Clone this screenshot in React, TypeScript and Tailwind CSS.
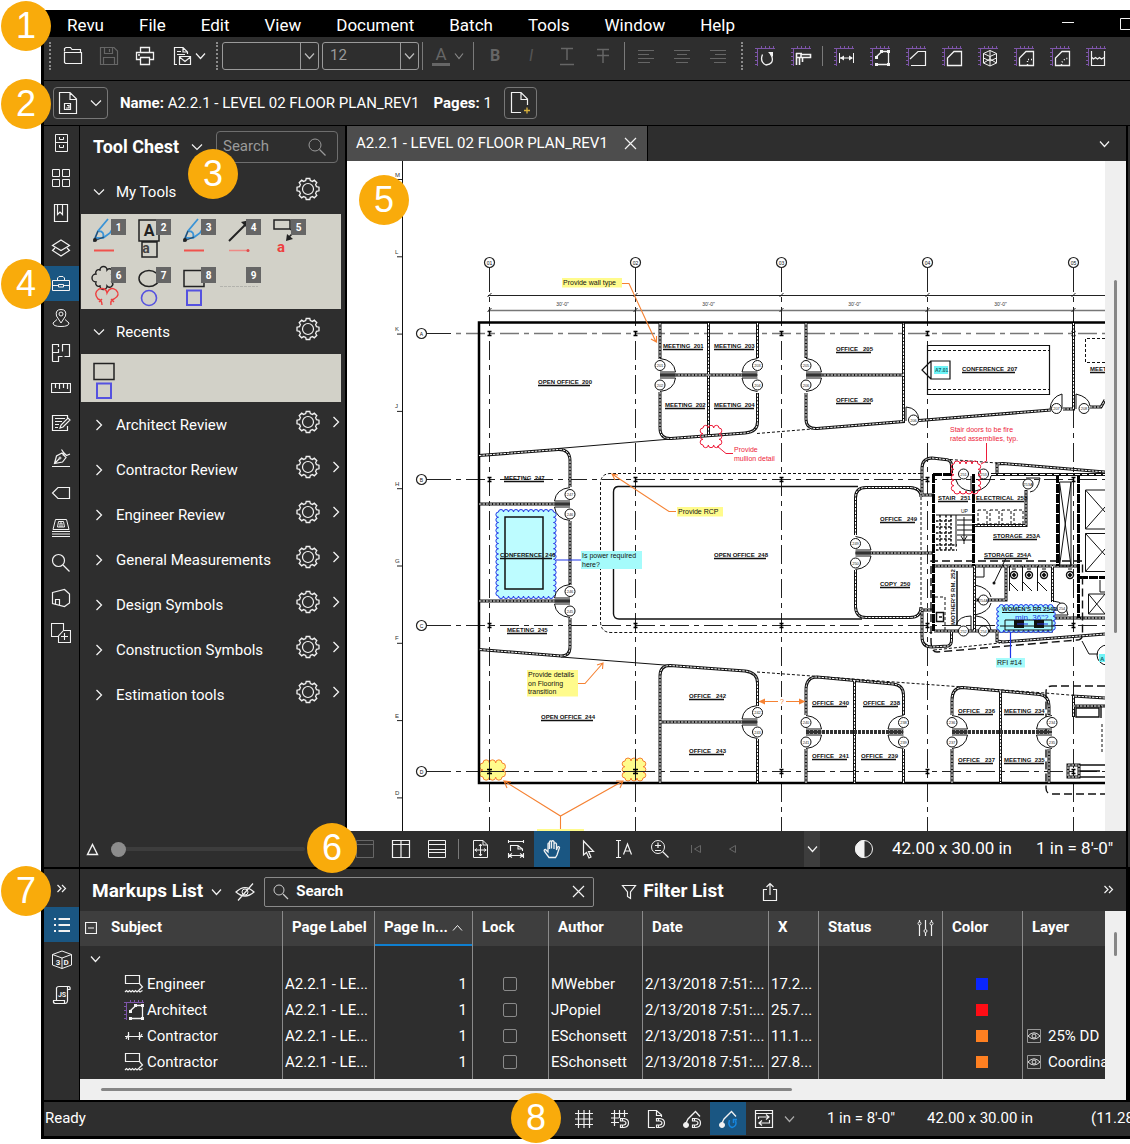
import { useState, type ReactNode } from 'react';

function Svg({ w = 20, h = 20, color = '#f2f2f2', fill = 'none', children }: { w?: number; h?: number; color?: string; fill?: string; children: ReactNode }) {
  return (
    <svg width={w} height={h} viewBox={`0 0 ${w} ${h}`} fill={fill} stroke={color} strokeWidth="1" className="shrink-0" aria-hidden="true">
      {children}
    </svg>
  );
}

const Chevron = ({ color, w = 11 }: { color?: string; w?: number }) => (
  <Svg w={w} h={8} color={color}><path d={`M1 1.5L${w / 2} 6.5L${w - 1} 1.5`} strokeWidth="1.2" /></Svg>
);
const ChevronRight = () => <Svg w={8} h={12}><path d="M1.5 1L6.5 6L1.5 11" strokeWidth="1.3" /></Svg>;
const DoubleChevron = () => <Svg w={11} h={9}><path d="M1.5 1L5 4.5L1.5 8M6 1L9.5 4.5L6 8" strokeWidth="1.2" /></Svg>;
const Close = () => <Svg w={13} h={13}><path d="M1 1L12 12M12 1L1 12" strokeWidth="1.2" /></Svg>;
const Magnifier = ({ color }: { color?: string }) => <Svg w={20} h={20} color={color}><circle cx="8" cy="8" r="6" /><path d="M12.5 12.5L18.5 18.5" strokeWidth="1.3" /></Svg>;

const Gear = () => (
  <Svg w={24} h={24}>
    <path strokeWidth="1.3" d="M10.2 1.5h3.6l.5 2 2.2.9 1.8-1.2 2.5 2.5-1.2 1.8.9 2.2 2.5.5v3.6l-2.5.5-.9 2.2 1.2 1.8-2.5 2.5-1.8-1.2-2.2.9-.5 2h-3.6l-.5-2-2.2-.9-1.8 1.2-2.5-2.5 1.2-1.8-.9-2.2-2.5-.5v-3.6l2.5-.5.9-2.2-1.2-1.8 2.5-2.5 1.8 1.2 2.2-.9z" />
    <circle cx="12" cy="12" r="5.5" strokeWidth="1.2" />
  </Svg>
);

const Ruler = ({ children }: { children: ReactNode }) => (
  <Svg w={22} h={22}>
    <path stroke="#7d55a8" d="M3.5 3V21M1 3.5H21M1 7.5H3M1 11.5H3M1 15.5H3M1 19.5H3M7.5 1V3M11.5 1V3M15.5 1V3M19.5 1V3" />
    {children}
  </Svg>
);

const AreaIcon = () => (
  <Ruler>
    <path d="M8.5 19.5H19.5V6.5H13L7 12" strokeWidth="1.3" />
    <path fill="#f2f2f2" stroke="none" d="M11 5h3v3h-3zM18 5h3v3h-3zM18 18h3v3h-3zM6 18h3v3h-3zM6 11h3v3h-3z" />
  </Ruler>
);

const measureTools = [
  { name: 'Length', icon: <Ruler><path d="M6.5 8V18M20.5 8V18M7 13H19" /><path d="M7 13L11 10.5V15.5zM20 13L16 10.5V15.5z" fill="#f2f2f2" stroke="none" /></Ruler> },
  { name: 'Area', icon: <AreaIcon /> },
  { name: 'Polylength', icon: <Ruler><path d="M5 14L13 6.5H20.5V20.5H6" strokeWidth="1.2" /></Ruler> },
  { name: 'Perimeter', icon: <Ruler><path d="M6.5 20.5V13L13 6.5H20.5V20.5Z" strokeWidth="1.3" /></Ruler> },
  { name: 'Volume', icon: <Ruler><path d="M13 5.5L19.5 8.5V18L13 21L6.5 18V8.5ZM6.5 8.5L13 11.5L19.5 8.5M13 11.5V21M6.5 13L13 16L19.5 13M6.5 18L13 14L19.5 18M13 5.5V14" /></Ruler> },
  { name: 'Cutout', icon: <Ruler><path d="M6.5 20.5V13L13 6.5H20.5V20.5Z" strokeWidth="1.3" /><path d="M14.5 20V14.5H20" strokeDasharray="1 2" strokeWidth="1.4" /></Ruler> },
  { name: 'Radius', icon: <Ruler><path d="M6.5 20.5V13L13 6.5H20.5V20.5Z" strokeWidth="1.3" /><path d="M12.5 20V17.5L16.5 13.5H20" strokeDasharray="1 2" strokeWidth="1.4" /></Ruler> },
  { name: 'Depth', icon: <Ruler><path d="M6.5 6V20.5H19.5V6M7 12.5L8.5 14L10.5 12.5L12.5 14L14.5 12.5L16.5 14L19 12.5" strokeWidth="1.2" /></Ruler> },
];

const panels = [
  { name: 'File Access', icon: <Svg><path d="M4.5 1.5H16.5V18.5H4.5ZM4.5 9.5H16.5M8.5 4V6.5H12.5V4M8.5 12V14.5H12.5V12" /></Svg> },
  { name: 'Thumbnails', icon: <Svg><path d="M1.5 1.5H8.5V8.5H1.5ZM11.5 1.5H18.5V8.5H11.5ZM1.5 11.5H8.5V18.5H1.5ZM11.5 11.5H18.5V18.5H11.5Z" /></Svg> },
  { name: 'Bookmarks', icon: <Svg><path d="M3.5 1.5H16.5V18.5H3.5ZM6.5 1.5V11.5L9 9L11.5 11.5V1.5" strokeWidth="1.2" /></Svg> },
  { name: 'Layers', icon: <Svg><path d="M10 2L18.5 7.5L10 12.5L1.5 7.5ZM4 10L1.5 12.5L10 18L18.5 12.5L16 10" strokeWidth="1.2" /></Svg> },
  { name: 'Tool Chest', icon: <Svg><path d="M1.5 7.5H18.5V17.5H1.5ZM6.5 7.5V5L8 3.5H12L13.5 5V7.5M1.5 12.5H7M13 12.5H18.5M7.5 11.5H12.5V14H7.5Z" /></Svg> },
  { name: 'Spaces', icon: <Svg><path d="M10 15L5.5 8Q4 1.5 10 1.5Q16 1.5 14.5 8Z" /><circle cx="10" cy="6" r="2" /><path d="M6 11.5L2 15Q2 18.5 10 18.5Q18 18.5 18 15L14 11.5" /></Svg> },
  { name: 'Sets', icon: <Svg><path d="M1.5 18.5V1.5H7.5V4M11 1.5H18.5V13.5H13.5M7.5 6V9.5H1.5M11.5 1.5V8.5M11.5 13.5H7.5V18.5H1.5" strokeWidth="1.2" /></Svg> },
  { name: 'Measurements', icon: <Svg><path d="M.5 5.5H19.5V14.5H.5ZM4.5 6V10M8.5 6V11M12.5 6V10M16.5 6V11" strokeWidth="1.2" /></Svg> },
  { name: 'Markups', icon: <Svg><path d="M16.5 5V2.5H1.5V17.5H16.5V13M4 5.5H14M4 8.5H11M4 11.5H8M4 14.5H7M9 15L10 12L17 5L19 7L12 14Z" strokeWidth="1.2" /></Svg> },
  { name: 'Signatures', icon: <Svg><path d="M1 18.5H19M3.5 15.5L5.5 8L11 5L15 9.5L11.5 14ZM4 15L8.5 10.5M10.5 1.5L13 5L15.5 7.5L19 6M13 5L12 7.5" strokeWidth="1.2" /><circle cx="9" cy="10" r="1" /></Svg> },
  { name: 'Flags', icon: <Svg><path d="M7 4.5H18.5V15.5H7L1.5 10Z" strokeWidth="1.2" /></Svg> },
  { name: 'Sessions', icon: <Svg><path d="M4.5 1.5H15.5L18 11.5H2ZM6.5 9L7.5 3.5H12.5L13.5 9ZM9 9V5H11V9M1 13.5H19M1 16H19M1 18.5H19" /></Svg> },
  { name: 'Search', icon: <Svg><circle cx="7.5" cy="7.5" r="6" strokeWidth="1.2" /><path d="M12 12L18.5 18.5" strokeWidth="1.3" /></Svg> },
  { name: '3D Model Tree', icon: <Svg><path d="M1.5 4.5L13.5 1.5L18.5 6V15L13.5 18.5L1.5 15.5ZM4.5 16V11.5H8.5V17" strokeWidth="1.2" /></Svg> },
  { name: 'Properties', icon: <Svg><path d="M7.5 13.5H.5V.5H12.5V7M19.5 7.5V19.5H7.5V13L12.5 7.5ZM13.5 10V17M10 13.5H17" strokeWidth="1.1" /></Svg> },
];

function IconButton({ label, active, children }: { label: string; active?: boolean; children: ReactNode }) {
  return (
    <button aria-label={label} className={`flex w-9 shrink-0 items-center justify-center self-stretch ${active ? 'bg-[#1a5682]' : ''}`}>
      {children}
    </button>
  );
}

const Handle = () => <span className="flex w-[11px] shrink-0 justify-center"><span className="h-7 border-l-2 border-dotted border-[#8a8a8a]" /></span>;
const Sep = ({ tall }: { tall?: boolean }) => <span className={`mx-[3px] w-px shrink-0 bg-[#7a7a7a] ${tall ? 'h-7' : 'h-5'}`} />;

function MenuBar() {
  const items = ['Revu', 'File', 'Edit', 'View', 'Document', 'Batch', 'Tools', 'Window', 'Help'];
  return (
    <header className="flex h-[27px] shrink-0 items-center justify-between overflow-hidden bg-black pl-[23px]">
      <nav className="flex gap-[35px] pt-1 text-[17px] text-white">
        {items.map((m) => <button key={m}>{m}</button>)}
      </nav>
      <div className="flex items-start gap-11">
        <button aria-label="Minimize"><Svg w={14} h={14}><path d="M1 5.5H13" /></Svg></button>
        <button aria-label="Maximize" className="w-[11px] overflow-hidden"><Svg w={14} h={14}><path d="M1.5 1.5H13V12.5H1.5Z" /></Svg></button>
      </div>
    </header>
  );
}

function Combo({ label, options }: { label: string; options: string[] }) {
  return (
    <span className="relative flex h-[28px] w-[97px] shrink-0">
      <select aria-label={label} className="w-full appearance-none rounded-[3px] border border-[#9a9a9a] bg-transparent pl-[7px] text-[15px] text-[#9a9a9a]">
        {options.map((o) => <option key={o}>{o}</option>)}
      </select>
      <span className="pointer-events-none absolute inset-y-px right-px flex w-[18px] items-center justify-center border-l border-[#9a9a9a]"><Chevron color="#bbb" /></span>
    </span>
  );
}

function Toolbar() {
  const dim = '#666';
  return (
    <div className="flex h-[43px] shrink-0 items-center overflow-hidden bg-[#2e2e2e] pb-1.5">
      <Handle />
      <IconButton label="Open"><Svg><path d="M1.5 5.5V2.5L3 1.5H7.5L9 3.5H17.5V6M1.5 6.5H18.5V17.5H2.5L1.5 16.5Z" strokeWidth="1.2" /></Svg></IconButton>
      <IconButton label="Save"><Svg color={dim}><path d="M1.5 1.5H15L18.5 5V18.5H1.5ZM5.5 1.5V7.5H13.5V1.5M10.5 3V6M4.5 18.5V11.5H15.5V18.5" strokeWidth="1.2" /></Svg></IconButton>
      <IconButton label="Print"><Svg><path d="M5.5 6V1.5H14.5V6M5 13.5H1.5V6.5H18.5V13.5H15M5.5 11.5H14.5V18.5H5.5ZM3 9H5" strokeWidth="1.3" /></Svg></IconButton>
      <button aria-label="Email" className="flex w-[48px] shrink-0 items-center gap-0.5 pl-[10px]">
        <Svg><path d="M4 18.5H1.5V1.5H10L14.5 6V8M10 1.5V6H14.5M4 5.5H8M4 8.5H12M6.5 10.5H17.5V18.5H6.5ZM6.5 11L12 15.5L17.5 11" strokeWidth="1.2" /></Svg>
        <Chevron />
      </button>
      <Handle />
      <Combo label="Font" options={['']} />
      <span className="w-[3px] shrink-0" />
      <Combo label="Font size" options={['12']} />
      <Sep tall />
      <button aria-label="Text color" className="flex w-11 shrink-0 items-center justify-center gap-1 text-[#666]">
        <span className="border-b-[3px] border-[#666] px-[3px] text-[17px] leading-[18px]">A</span>
        <Chevron color="#888" w={10} />
      </button>
      <Sep tall />
      <IconButton label="Bold"><span className="font-bold text-[#666]">B</span></IconButton>
      <IconButton label="Italic"><span className="italic text-[#555]">I</span></IconButton>
      <IconButton label="Underline"><Svg color={dim}><path d="M4 2.5H16M10 2V14M3 18.5H17" strokeWidth="1.5" /></Svg></IconButton>
      <IconButton label="Strikethrough"><Svg color={dim}><path d="M4 3.5H16M10 3V17M4 9.5H16" strokeWidth="1.5" /></Svg></IconButton>
      <Sep tall />
      <IconButton label="Align left"><Svg color={dim}><path d="M2 4.5H18M2 8.5H13M2 12.5H18M2 16.5H14" /></Svg></IconButton>
      <IconButton label="Align center"><Svg color={dim}><path d="M2 4.5H18M5 8.5H15M2 12.5H18M4 16.5H16" /></Svg></IconButton>
      <IconButton label="Align right"><Svg color={dim}><path d="M2 4.5H18M7 8.5H18M2 12.5H18M6 16.5H18" /></Svg></IconButton>
      <Handle />
      <IconButton label="Rotate"><Ruler><path d="M8.5 9.5Q5.5 17 12 20Q20 19 18 12L16 8" strokeWidth="1.3" /><path d="M14 7H19V12Z" fill="#f2f2f2" stroke="none" /></Ruler></IconButton>
      <IconButton label="Calibrate"><Ruler><path d="M6.5 8V20M9.5 13V20M12.5 13V17M6 8.5H12M7 12.5H20.5V9.5H11V12" strokeWidth="1.6" /></Ruler></IconButton>
      <Sep />
      {measureTools.map((t) => <IconButton key={t.name} label={t.name}>{t.icon}</IconButton>)}
    </div>
  );
}

function FileBar() {
  return (
    <div className="mt-px flex h-11 shrink-0 items-center bg-[#2e2e2e] pl-[9px] text-[15px] whitespace-nowrap text-white">
      <button aria-label="File properties" className="flex h-8 w-[55px] items-center gap-3 rounded border border-[#777] pl-1">
        <Svg w={20} h={24}><path d="M1.5 1.5H12L18.5 8V22.5H1.5ZM12 1.5V8.5H18.5M6.5 12.5H12.5V18.5H6.5ZM9 14.5H11V17H8" strokeWidth="1.2" /></Svg>
        <Chevron w={12} />
      </button>
      <span className="ml-3"><b>Name:</b> A2.2.1 - LEVEL 02 FLOOR PLAN_REV1</span>
      <span className="ml-3.5"><b>Pages:</b> 1</span>
      <button aria-label="Add page" className="ml-3 flex h-8 w-[33px] items-center justify-center rounded border border-[#777]">
        <Svg w={22} h={26}><path d="M12 22.5H2.5V2.5H12L18.5 9V15M12 2.5V9.5H18.5" strokeWidth="1.2" /><path d="M15 20.5H21M18 17.5V23.5" stroke="#d9b23c" strokeWidth="1.3" /></Svg>
      </button>
    </div>
  );
}

const penArt = (
  <g>
    <path d="M15 5L5 17L2 24L10 24L17 19L23 9M5 17Q12 17 10 24" stroke="#3a93d6" strokeWidth="1.8" />
    <path d="M5 17L1 27L11 23" stroke="#2c4a66" strokeWidth="1.2" />
    <circle cx="2" cy="26" r="2" fill="#222" stroke="none" />
    <path d="M1 36.5H21" stroke="#f0524d" strokeWidth="2" />
  </g>
);
const rectArt = (
  <g><path d="M1 8.5H21V24.5H1Z" stroke="#222" strokeWidth="1.5" /><path d="M4 28.5H18V43H4Z" stroke="#5552e0" strokeWidth="2" /></g>
);
const myTools: ReactNode[] = [
  penArt,
  <g><path d="M1 6H21V27H1ZM4 28H19V43H4Z" stroke="#222" strokeWidth="1.5" /><text x="11" y="22" textAnchor="middle" fontSize="16" fontWeight="bold" fill="#222">A</text><text x="8" y="39" textAnchor="middle" fontSize="14" fontWeight="bold" fill="#444">a</text></g>,
  penArt,
  <g><path d="M1 27L20 8" stroke="#222" strokeWidth="2" /><path d="M22 6L13 8L20 15Z" fill="#222" /><path d="M1 36.5H20" stroke="#ee8a86" strokeWidth="1.5" /><circle cx="20" cy="36.5" r="1.5" fill="#e04a4a" /></g>,
  <g><path d="M1 6H17V15H1ZM17 15L21 18L15 24" stroke="#222" strokeWidth="1.5" /><path d="M13 27L14 20L20 25Z" fill="#222" /><text x="8" y="38" textAnchor="middle" fontSize="15" fontWeight="bold" fill="#ee3f3f">a</text></g>,
  <g>
    <path d="M3 12a3 3 0 0 1 4-4a3 3 0 0 1 7 0a3 3 0 0 1 5 4a3 3 0 0 1 0 8a3 3 0 0 1-5 4a3 3 0 0 1-7 0a3 3 0 0 1-4-4a3 3 0 0 1 0-8z" stroke="#222" strokeWidth="1.4" />
    <path d="M9 43Q9 38 5 37Q0 31 6 27Q13 25 14 31Q17 24 23 28Q28 33 21 37Q17 38 18 43M6 40L9 37M18 37L21 40" stroke="#ee3f3f" strokeWidth="1.4" />
  </g>,
  <g><ellipse cx="11" cy="16.5" rx="10" ry="8" stroke="#222" strokeWidth="1.5" /><circle cx="11" cy="36" r="7.5" stroke="#5552e0" strokeWidth="1.6" /></g>,
  rectArt,
  <path d="M-8 24.5H30" stroke="#b3b3ad" strokeDasharray="3 1" />,
];

function ToolGroup({ name, open, children }: { name: string; open?: boolean; children?: ReactNode }) {
  return (
    <section>
      <div className="flex h-[45px] items-center pl-[13px]">
        <button className="flex flex-1 items-center pt-px text-left text-[15px]">
          <span className="flex w-[23px]">{open ? <Chevron w={12} /> : <span className="pl-0.5"><ChevronRight /></span>}</span>{name}
        </button>
        <span className="flex w-[49px] items-center gap-3 pb-1.5">
          <button aria-label={`${name} settings`}><Gear /></button>
          {!open && <ChevronRight />}
        </span>
      </div>
      {children}
    </section>
  );
}

function ToolChest() {
  const [zoom, setZoom] = useState(0);
  const groups = ['Architect Review', 'Contractor Review', 'Engineer Review', 'General Measurements', 'Design Symbols', 'Construction Symbols', 'Estimation tools'];
  return (
    <aside className="flex w-[265px] shrink-0 flex-col bg-[#2e2e2e] text-white">
      <div className="flex h-[43px] items-center pb-0.5 pl-[13px]">
        <h2 className="text-lg font-bold whitespace-nowrap">Tool Chest</h2>
        <button aria-label="Tool Chest menu" className="ml-3"><Chevron w={12} /></button>
        <label className="mr-[7px] ml-auto flex h-8 w-[122px] items-center rounded border border-[#6e6e6e] pr-2.5 pl-1.5">
          <input aria-label="Search tools" placeholder="Search" className="w-full min-w-0 flex-1 bg-transparent text-[15px] outline-none placeholder:text-[#9a9a9a]" />
          <Magnifier color="#999" />
        </label>
      </div>
      <ToolGroup name="My Tools" open>
        <div className="mr-1 ml-px grid grid-cols-[repeat(5,45px)] gap-y-px bg-[#d2d1c8] pl-3">
          {myTools.map((art, i) => (
            <button key={i} aria-label={`Tool ${i + 1}`} className="relative h-[47px]">
              <svg width="45" height="47" viewBox="0 0 45 47" fill="none" className="overflow-visible">{art}</svg>
              <span className="absolute top-[5px] left-[18px] flex h-4 w-[15px] items-center justify-center bg-[#666] text-[10px] font-bold">{i + 1}</span>
            </button>
          ))}
        </div>
      </ToolGroup>
      <ToolGroup name="Recents" open>
        <div className="mr-1 ml-px flex h-12 bg-[#d2d1c8] pl-3">
          <button aria-label="Rectangle"><svg width="45" height="47" viewBox="0 0 45 47" fill="none">{rectArt}</svg></button>
        </div>
      </ToolGroup>
      {groups.map((g) => <ToolGroup key={g} name={g} />)}
      <div className="mt-auto flex h-9 items-center gap-3 pl-1.5">
        <Svg w={13} h={13}><path d="M6.5 1.5L11.5 11.5H1.5Z" strokeWidth="1.4" /></Svg>
        <input
          type="range"
          aria-label="Tool size"
          value={zoom}
          onChange={(e) => setZoom(Number(e.target.value))}
          className="h-1 w-[194px] appearance-none rounded bg-[#3d3d3d] [&::-webkit-slider-thumb]:size-[15px] [&::-webkit-slider-thumb]:appearance-none [&::-webkit-slider-thumb]:rounded-full [&::-webkit-slider-thumb]:bg-[#8c8c8c]"
        />
      </div>
    </aside>
  );
}

// ---- floor plan ----

const cols = [489.5, 635.5, 781.5, 927.5, 1073.5];
const rows = [333.5, 479.5, 625.5, 771.5];

// text, x, baseline, underline width
const rooms: [string, number, number, number][] = [
  ['MEETING  201', 663, 348, 40], ['MEETING  203', 714, 348, 40], ['MEETING  202', 665, 407, 40], ['MEETING  204', 714, 407, 40],
  ['OPEN OFFICE  200', 538, 384, 52], ['MEETING  247', 504, 480, 40], ['OFFICE   205', 836, 351, 35], ['OFFICE   206', 836, 402, 35],
  ['CONFERENCE  207', 962, 371, 53], ['MEETING', 1090, 371, 40], ['CONFERENCE  246', 500, 557, 52], ['MEETING  245', 507, 632, 40],
  ['OPEN OFFICE  244', 541, 719, 52], ['OFFICE   242', 689, 698, 35], ['OFFICE   243', 689, 753, 35], ['OPEN OFFICE  248', 714, 557, 52],
  ['OFFICE   249', 880, 521, 35], ['COPY  250', 880, 586, 30], ['STAIR   251', 938, 500, 30], ['ELECTRICAL  253', 976, 500, 48],
  ['STORAGE  253A', 993, 538, 44], ['STORAGE  254A', 984, 557, 44], ['OFFICE   240', 812, 705, 35], ['OFFICE   238', 863, 705, 35],
  ['OFFICE   241', 812, 758, 35], ['OFFICE   239', 861, 758, 35], ['OFFICE   236', 958, 713, 35], ['OFFICE   237', 958, 762, 35],
  ['MEETING  234', 1004, 713, 40], ['MEETING  235', 1004, 762, 40],
];

const walls = [
  'M660 323V359M660 392V428Q660 439 671 438.5L745 433Q757.5 432 757.5 422V393M757.5 323V358M708.5 323V436M660 375H757',
  'M806 323V358M806 393V419Q806 429 817 428.5L903.5 421.5V323M806 375H903',
  'M919 420.5L1051 410M1063 409H1073.5V323M1090 407H1101L1105 400',
  'M479 455.5L558 449.5Q570 449 570 461V487M570 521V585M570 618V647Q570 656 561 656L479 649.5M479 504H570M479 601H570',
  'M855.5 535V498Q855.5 487.5 866 487.5H910Q921 488 921 497M855.5 570V607Q856 617.5 866 617.5H910Q921 617.5 921 607M855.5 553H933',
  'M951.5 473V465Q951 459.5 945 459.5L932 458Q922 458.5 922 468V495H934M997 474V464L1003 463.5L1105 472',
  'M934 610H922V637Q922 647 932 647L948 646Q951.5 645 951.5 640V632M997 632V641L1003 642L1105 634',
  'M660 783V676Q660 665.5 670 665.5L745 671Q757.5 672.5 757.5 683V706M757.5 739V783M660 722H757',
  'M806 715V690Q806 677 817 677L893 684Q903.5 685 903.5 695V715M806 749V783M903.5 749V783M854.5 680V783',
  'M952 715V700Q952 688 962 687.5L1040 694.5Q1049 696 1049 706V715M952 749V783M1049 749V783M1000.5 691V783',
  'M974 525.5H1026V490M1006 566V600H976M974.5 566V631M934 566H1080M934 631H1053M1052.5 566V602M1053 618H1105M1105 698L1073.5 696V717M1073 706H1105',
  'M1068 765H1079V777H1068Z',
];

// pairs of doors either side of a party wall; s is the swing side
const doors: { x: number; y: number; s: number; a: string; b: string }[] = [
  { x: 660, y: 375, s: 1, a: '201', b: '202' }, { x: 757.5, y: 375, s: -1, a: '203', b: '204' }, { x: 806, y: 375, s: 1, a: '205', b: '206' },
  { x: 570, y: 504, s: -1, a: '247', b: '246' }, { x: 570, y: 601, s: -1, a: '246', b: '245' }, { x: 855.5, y: 553, s: 1, a: '249', b: '250' },
  { x: 757.5, y: 722, s: -1, a: '242', b: '243' }, { x: 806, y: 732, s: 1, a: '240', b: '241' }, { x: 903.5, y: 732, s: -1, a: '238', b: '239' },
  { x: 952, y: 732, s: 1, a: '236', b: '237' }, { x: 1052, y: 732, s: -1, a: '234', b: '235' },
];

const tags: [number, number, string][] = [
  [913.5, 420, '206'], [1056.5, 408.5, '207'], [1084, 408.5, '208'], [963.5, 474, '251'], [983.5, 474, '253'], [1028, 484, '253A'],
  [983.5, 600, '254A'], [963.5, 631, '252'], [983.5, 631, '254'], [1062, 608, '254'],
];

function cloudPath(x: number, y: number, w: number, h: number, step: number) {
  const nx = Math.round(w / step);
  const ny = Math.round(h / step);
  const dx = w / nx;
  const dy = h / ny;
  const arc = (r: number, ax: number, ay: number) => `a${r / 2} ${r / 2} 0 0 1 ${ax} ${ay}`;
  return `M${x} ${y}` + arc(dx, dx, 0).repeat(nx) + arc(dy, 0, dy).repeat(ny) + arc(dx, -dx, 0).repeat(nx) + arc(dy, 0, -dy).repeat(ny) + 'Z';
}

function Tag({ x, y, label }: { x: number; y: number; label: string }) {
  return (
    <g>
      <circle cx={x} cy={y} r="5" fill="#fff" stroke="#111" strokeWidth="1" />
      <text x={x} y={y + 1.5} fontSize="4" textAnchor="middle" fill="#333">{label}</text>
    </g>
  );
}

function Note({ x, y, w, lines, bg, color = '#111' }: { x: number; y: number; w: number; lines: string[]; bg?: string; color?: string }) {
  return (
    <g>
      {bg && <rect x={x - 1} y={y - 7} width={w} height={lines.length * 8.5 + 1} fill={bg} />}
      {lines.map((l, i) => <text key={l} x={x} y={y + i * 8.5} fontSize="7" fill={color}>{l}</text>)}
    </g>
  );
}

function FloorPlan() {
  const orange = '#f58233';
  const red = '#ee1c3a';
  const blue = '#2036e8';
  return (
    <svg viewBox="347 161 758 670" preserveAspectRatio="xMinYMin slice" className="h-full min-w-0 flex-1 bg-white font-['Liberation_Sans',sans-serif]" fill="none" stroke="none" role="img" aria-label="Level 02 floor plan">
      <g stroke="#222">
        <path d="M402.5 161V831" stroke="#111" />
        {['M', 'L', 'K', 'J', 'H', 'G', 'F', 'E', 'D'].map((l, i) => (
          <g key={l}>
            <path d={`M397 ${179.5 + i * 77.3}H402`} />
            <text x="395" y={176.5 + i * 77.3} fontSize="6" fill="#333" stroke="none">{l}</text>
          </g>
        ))}
        <path d="M488 295.5H1105" />
        <path d="M488 310.5H1105" stroke="#777" strokeWidth="1.5" />
        {cols.map((x, i) => (
          <g key={x}>
            <path d={`M${x} 267V292`} />
            <path d={`M${x} 297V831`} strokeDasharray="5 5 19 5" />
            <path d={`M${x - 2} 312L${x + 2} 308M${x - 2} 297L${x + 2} 293`} />
            <circle cx={x} cy="262.5" r="5" strokeWidth="1.2" />
            <text x={x} y="264.5" fontSize="5" textAnchor="middle" fill="#111" stroke="none">{`0${i + 1}`}</text>
            {i < 4 && <text x={x + 73} y="306" fontSize="5" textAnchor="middle" fill="#333" stroke="none">30'-0"</text>}
          </g>
        ))}
        {rows.map((y, i) => (
          <g key={y}>
            <path d={`M427 ${y}H451`} />
            <path d={`M456 ${y}H1105`} strokeDasharray="5 5 19 5" stroke={i === 0 ? '#777' : '#222'} strokeWidth={i === 0 ? 1.5 : 1} />
            <circle cx="421.5" cy={y} r="5" strokeWidth="1.2" />
            <text x="421.5" y={y + 2} fontSize="5" textAnchor="middle" fill="#111" stroke="none">{'ABCD'[i]}</text>
            {cols.map((x) => <path key={x} d={`M${x - 2} ${y - 2}H${x + 2}M${x} ${y - 2}V${y + 2}M${x - 2} ${y + 2}H${x + 2}`} stroke="#000" strokeWidth="1.5" />)}
          </g>
        ))}
      </g>

      <path d={cloudPath(498.5, 512, 55, 84, 5.2)} fill="#bdfcff" stroke={blue} />
      <path d={cloudPath(483, 763, 19, 14, 6)} fill="#fffb8c" stroke={orange} />
      <path d={cloudPath(625, 761, 18, 17, 6)} fill="#fffb8c" stroke={orange} />
      <path d="M481 771.5H504M489.5 760V780M623 771.5H646M635.5 758V780" stroke="#222" />
      <path d="M487 769.5H492M489.5 769V774M487 773.5H492M633 769.5H638M635.5 769V774M633 773.5H638" stroke="#000" strokeWidth="1.5" />

      <path d="M1105 322.5H479V783H1105" stroke="#000" strokeWidth="2.5" />
      <path d="M558 448.5L671 439M561 657L671 665.5" stroke="#111" />
      <g stroke="#111" strokeDasharray="3 2">
        <path d="M757 433.5L812 429M757 672L1045 693L1105 698M930 458L997 463M928 350.5H1049M928 389.5H1049M1105 338.5H1085.5V362.5H1105" />
        <path d="M921 473.5H610Q600.5 474 600.5 484V622Q601 632.5 611 632.5H933M921 497V607" />
        <path d="M934 650L1000 643M978 510H987V524H978ZM990 510H999V524H990ZM1002 510H1011V524H1002ZM1014 510H1023V524H1014ZM935 597H945V631M1102 724V753" />
      </g>
      <path d="M858 486.5H618Q613.5 487 613.5 492V614Q614 619 619 619H862" stroke="#111" strokeWidth="1.4" />
      <path d="M927.5 345.5H1049.5V394.5H927.5ZM931 361H950V379H931ZM931 361L922 370L931 379" stroke="#111" strokeWidth="1.2" />
      <rect x="934" y="366" width="14" height="8" fill="#6ff4f7" />
      <text x="935" y="372" fontSize="5" fontWeight="bold" fill="#15666b">A7.01</text>
      <path d="M505 517H543V589H505Z" stroke="#111" strokeWidth="1.5" />
      <path d={walls.join('')} stroke="#111" strokeWidth="3" />
      <path d={walls.join('')} stroke="#fff" strokeWidth="1" strokeDasharray="2.5 1" />
      <path d="M806 732H903M952 732H1049" stroke="#333" strokeWidth="4" strokeDasharray="3 1" />

      {/* stair and service core */}
      <path d="M933.5 474V631M1078.5 474V618M973.5 474V566M1057.5 474V566M933 474.5H952M1079 577.5H1105" stroke="#000" strokeWidth="3" strokeDasharray="9 1" />
      <path d="M991 474.5H1105" stroke="#111" strokeWidth="3" /><path d="M991 474.5H1105" stroke="#fff" strokeDasharray="5 2" />
      <path d="M1082 561H931V640Q931 652 937 652L1077 640Q1082.5 640 1082.5 634V561M1105 686H1052Q1046 686 1046 692V788Q1046 794 1052 794H1105" stroke="#111" strokeWidth="1.4" strokeDasharray="8 4" />
      <path d="M956 515V547M973 515H936M957 520H972M957 525H972M957 530H972M957 535H972M957 540H972M964 517V544M961 536L964 541L967 536" stroke="#111" />
      <path d="M936 521H951M936 527H951M936 533H951M936 539H951M936 545H957M936 550H957M951 515V550M940 515V550M946 515V550" stroke="#111" strokeWidth="1.5" strokeDasharray="2.5 1.5" />
      <path d="M1059.5 482H1071V566H1059.5ZM1059.5 482L1071 566M1071 482L1059.5 566M1105 490H1085.5V529H1105M1085.5 490L1105 512M1085.5 529L1105 507M1105 533.5H1085.5V571.5H1105M1085.5 533.5L1105 555M1085.5 571.5L1105 549M1105 594H1088.5V614H1105M1088.5 594L1105 614M1088.5 614L1105 594M1100 580V592H1105" stroke="#111" />
      <path d="M1009.5 566V591M1022.5 566V591M1037.5 566V591M1009 582L1018 591M1023 582L1032 591M1038 582L1047 591M976 577H984V567" stroke="#111" />
      {[1014, 1029, 1044, 1070].map((x) => (
        <g key={x} stroke="#111"><circle cx={x} cy="575" r="3.5" strokeWidth="1.4" /><circle cx={x} cy="575" r="1.5" fill="#111" /><path d={`M${x - 2} 569H${x + 2}`} /></g>
      ))}
      <path d="M936.5 612.5H943.5V621.5H936.5ZM939 617H942" stroke="#111" strokeWidth="1.5" />
      <path d="M1076 708H1099V717H1076ZM1101 706V718M1080 765H1105M1080 777H1105M1080 771H1100" stroke="#111" strokeWidth="1.4" />
      <path d="M1006 558L994 583" stroke="#111" /><circle cx="994" cy="583" r="1.5" fill="#111" />
      <path d="M906 421V407Q918 408 919 420M1062 409V394Q1051 397 1050 409M1076 409V394Q1089 397 1090 406M956 480Q959 490 971 491V476M975 491Q989 489 991 476M1026 478H1040Q1038 491 1030 492M956 625Q959 616 971 616V630M976 616Q989 617 991 630M975 615Q989 612 991 603M975 585Q989 588 991 597M1053 601Q1066 602 1068 615H1053" stroke="#111" />

      {doors.map((d) => (
        <g key={`${d.x}-${d.y}`}>
          <path d={`M${d.x} ${d.y - 16.5}Q${d.x + 14 * d.s} ${d.y - 15} ${d.x + 15.5 * d.s} ${d.y - 3}H${d.x}M${d.x} ${d.y + 16.5}Q${d.x + 14 * d.s} ${d.y + 15} ${d.x + 15.5 * d.s} ${d.y + 3}H${d.x}`} fill="#fff" stroke="#111" />
          <path d={`M${d.x} ${d.y}H${d.x + 15.5 * d.s}`} stroke="#333" strokeWidth="3" />
          <Tag x={d.x} y={d.y - 9.5} label={d.a} />
          <Tag x={d.x} y={d.y + 10} label={d.b} />
        </g>
      ))}
      {tags.map(([x, y, t]) => <Tag key={`${x}-${y}`} x={x} y={y} label={t} />)}

      <path d={cloudPath(999, 607, 54, 23, 5)} fill="#a5f6ff" stroke={blue} />
      <path d="M1000 626H1054M1005 620H1052V630H1005Z" stroke="#111" /><path d="M1014 620H1024V628H1014ZM1034 620H1044V628H1034Z" fill="#111" />
      <path d="M1017 624H1028M1037 624H1048M1010.5 632V658M556 560H582" stroke={blue} strokeWidth="1.2" />
      <text x="1002" y="611" fontSize="6" fontWeight="bold" fill="#123">WOMEN'S RR 254B</text>
      <path d="M1002 612.5H1054" stroke="#111" />
      <text x="1015" y="620" fontSize="8" fill={blue}>min. 36"?</text>
      <text x="961" y="513" fontSize="5" fill="#111">UP</text>
      <text transform="translate(955 625) rotate(-90)" fontSize="6" fontWeight="bold" fill="#111">MOTHER'S RM. 252</text>
      <path d="M957 625V571" stroke="#111" strokeWidth="1.5" />
      <path d="M1082 641L1089 654H1098" stroke="#111" /><circle cx="1107" cy="655" r="10" stroke="#111" />
      <rect x="1099" y="654" width="6" height="8" fill="#6ff4f7" /><text x="1100" y="661" fontSize="6" fontWeight="bold" fill="#15666b">A</text>

      {rooms.map(([t, x, y, w]) => (
        <g key={t}>
          <text x={x} y={y} fontSize="6" fontWeight="bold" fill="#111" className="whitespace-pre">{t}</text>
          <path d={`M${x} ${y + 1.5}H${x + w}`} stroke="#111" strokeWidth="1.5" />
        </g>
      ))}

      <g stroke={orange} strokeWidth="1.1">
        <path d="M622 283.5H629L656 342M656.5 336V342L651 339M676 511.5H669L612 474M618 475L612 474L615 480M578 683.5H585L603 663M602.5 669L603 663L597 665M504 781L560.5 816L623 781M560.5 816V831M511 782L504 781L507 788M616 781L623 781L620 788" />
        <path d="M760 701.5H778M786 701.5H804" />
        <path d="M758.5 701.5L765 698.5V704.5ZM805.5 701.5L799 698.5V704.5Z" fill={orange} stroke="none" />
      </g>
      <rect x="779" y="697" width="6" height="9" fill="#fff" />
      <text x="782" y="704" fontSize="7" textAnchor="middle" fill={orange}>?</text>
      <rect x="537" y="829" width="47" height="2" fill="#fffb8c" />
      <path d={cloudPath(703, 428, 16, 17, 5.5)} stroke={red} />
      <path d={cloudPath(954, 464, 24, 27, 6)} stroke={red} />
      <path d="M717 446L726 453.5H733M986.5 443V461L981 464" stroke={red} />
      <Note x={563} y={285} w={60} lines={['Provide wall type']} bg="#fffb8c" />
      <Note x={678} y={514} w={46} lines={['Provide RCP']} bg="#fffb8c" />
      <Note x={582} y={558} w={61} lines={['Is power required', 'here?']} bg="#a5fbfb" />
      <Note x={528} y={677} w={51} lines={['Provide details', 'on Flooring', 'transition']} bg="#fffb8c" />
      <Note x={997} y={665} w={29} lines={['RFI #14']} bg="#a5fbfb" />
      <Note x={734} y={452} w={0} lines={['Provide', 'mullion detail']} color={red} />
      <Note x={950} y={432} w={0} lines={['Stair doors to be fire', 'rated assemblies, typ.']} color={red} />
    </svg>
  );
}

function DocumentArea() {
  return (
    <main className="mx-0.5 flex min-w-0 flex-1 flex-col bg-[#2e2e2e] text-white">
      <div className="flex h-[35px] shrink-0 items-center justify-between pr-4">
        <div className="flex h-full items-center gap-4 border-r border-black bg-[#4d4d4d] pr-2.5 pl-[9px] text-[15px] whitespace-nowrap">
          A2.2.1 - LEVEL 02 FLOOR PLAN_REV1
          <button aria-label="Close tab"><Close /></button>
        </div>
        <button aria-label="All tabs"><Chevron /></button>
      </div>
      <div className="flex min-h-0 flex-1">
        <FloorPlan />
        <div className="flex w-[21px] shrink-0 flex-col items-center bg-[#efefef] pt-[119px]">
          <div className="h-[353px] w-[3px] rounded bg-[#868686]" />
        </div>
      </div>
      <div className="flex h-9 shrink-0 items-center overflow-hidden whitespace-nowrap">
        <IconButton label="Single page"><Svg color="#666"><path d="M1.5 1.5H18.5V18.5H1.5ZM1.5 5.5H18.5" /></Svg></IconButton>
        <IconButton label="Split vertical"><Svg><path d="M1.5 1.5H18.5V18.5H1.5ZM1.5 5.5H18.5M10 1.5V18.5" strokeWidth="1.2" /></Svg></IconButton>
        <IconButton label="Split horizontal"><Svg><path d="M1.5 1.5H18.5V18.5H1.5ZM1.5 5.5H18.5M1.5 10.5H18.5M1.5 13.5H18.5" /></Svg></IconButton>
        <Sep />
        <IconButton label="Fit page"><Svg><path d="M3.5 1.5H13L17.5 6V18.5H3.5ZM13 1.5V6H17.5M10.5 5V17M4.5 11H16.5M9 7L10.5 5L12 7M9 15L10.5 17L12 15M7 9.5L5 11L7 12.5M14 9.5L16 11L14 12.5" /></Svg></IconButton>
        <IconButton label="Fit width"><Svg><path d="M2.5 1V4M17.5 1V4M2.5 2.5H17.5M4.5 12V6.5H12L16.5 10V12M12 6.5V10H16.5M2.5 14V19M17.5 14V19M3 16.5H17M6 14.5L3 16.5L6 18.5M14 14.5L17 16.5L14 18.5" strokeWidth="1.1" /></Svg></IconButton>
        <IconButton label="Pan" active><Svg><path strokeWidth="1.3" d="M7 18.5L2.5 12.5Q1.5 10.5 3.5 10.5L6 13V5Q6.2 3.5 7.5 4V10V3Q8 1 9.5 2.5V9.5V2.5Q10.5 1 12 2.5V10V4.5Q13.5 3 14.5 5V11L15.5 8Q17 7 17.5 8.5L15 16L13.5 18.5Z" /></Svg></IconButton>
        <IconButton label="Select"><Svg><path d="M5.5 2L15.5 12.5H10.5L13 18L11 19L8.5 13.5L5.5 16Z" strokeWidth="1.2" /></Svg></IconButton>
        <IconButton label="Select text"><Svg><path d="M2 1.5H7M4.5 1.5V18.5M2 18.5H7M9.5 15.5L13.5 5L17.5 15.5M11 12H16" strokeWidth="1.2" /></Svg></IconButton>
        <IconButton label="Zoom"><Svg><circle cx="8" cy="8" r="6.5" /><path d="M12.5 12.5L18.5 18.5M5 6.5H11M8 3.5V9M5 11.5H11" strokeWidth="1.2" /></Svg></IconButton>
        <IconButton label="First page"><Svg color="#666"><path d="M5.5 6V14M14.5 6.5V13.5L8.5 10Z" /></Svg></IconButton>
        <IconButton label="Previous page"><Svg color="#666"><path d="M13.5 6.5V13.5L7.5 10Z" /></Svg></IconButton>
        <input aria-label="Page" className="w-[54px] bg-transparent text-center outline-none" />
        <button aria-label="Page list" className="flex w-4 items-center justify-center self-stretch bg-[#3d3d3d]"><Chevron /></button>
        <button aria-label="Dimmer" className="ml-[34px]"><Svg><circle cx="10" cy="10" r="8.5" /><path d="M10 1.5A8.5 8.5 0 0 0 10 18.5Z" fill="#f2f2f2" /></Svg></button>
        <span className="ml-[18px] text-[17px]">42.00 x 30.00 in</span>
        <span className="ml-6 text-[17px]">1 in = 8'-0"</span>
      </div>
    </main>
  );
}

const ShapeIcon = () => <Svg><path d="M1.5 1.5H15.5V9.5H1.5ZM15.5 9.5L18.5 13L15 16M1 18L2.5 16.5L4 18L5.5 16.5L7 18L8.5 16.5L10 18L11.5 16.5L13 18L14.5 16.5L16 18L18.5 16.5" strokeWidth="1.2" /></Svg>;
const LengthIcon = () => <Svg><path d="M4.5 6V14M15.5 6V14M1 10.5H19M2 13L5 8M15 13L18 8" strokeWidth="1.2" /></Svg>;

const markups = [
  { subject: 'Engineer', icon: <ShapeIcon />, author: 'MWebber', x: '17.2...', color: 'bg-[#0a26ff]', layer: '' },
  { subject: 'Architect', icon: <AreaIcon />, author: 'JPopiel', x: '25.7...', color: 'bg-[#ff0d15]', layer: '' },
  { subject: 'Contractor', icon: <LengthIcon />, author: 'ESchonsett', x: '11.1...', color: 'bg-[#ff8021]', layer: '25% DD' },
  { subject: 'Contractor', icon: <ShapeIcon />, author: 'ESchonsett', x: '27.8...', color: 'bg-[#ff8021]', layer: 'Coordination' },
];

function MarkupsTable() {
  const th = 'overflow-hidden border-r border-[#8a8a8a] pb-0.5 pl-[9px] text-left font-bold';
  const td = 'overflow-hidden border-r border-[#8a8a8a] pl-[2px]';
  return (
    <table className="w-full table-fixed border-separate border-spacing-0 text-[15px] whitespace-nowrap">
      <colgroup>
        <col className="w-[203px]" /><col className="w-[92px]" /><col className="w-[98px]" /><col className="w-[76px]" /><col className="w-[94px]" />
        <col className="w-[126px]" /><col className="w-[50px]" /><col className="w-[124px]" /><col className="w-[80px]" /><col />
      </colgroup>
      <thead className="bg-[#3e3e3e]">
        <tr className="h-[35px]">
          <th className={th}>
            <span className="-ml-1 flex items-center gap-3.5">
              <button aria-label="Collapse all"><Svg w={12} h={12}><path d="M.5 .5H11.5V11.5H.5ZM3 6H9" strokeWidth="1.2" /></Svg></button>
              Subject
            </span>
          </th>
          <th className={th}>Page Label</th>
          <th className={`${th} shadow-[inset_0_-2px_0_#0f7fd0]`}><span className="flex items-center gap-1">Page In... <Svg w={11} h={8}><path d="M1 6.5L5.5 1.5L10 6.5" /></Svg></span></th>
          <th className={th}>Lock</th>
          <th className={th}>Author</th>
          <th className={th}>Date</th>
          <th className={th}>X</th>
          <th className={th}><span className="flex items-center justify-between pr-2">Status <Svg w={18} h={18}><path d="M3.5 6V17M9.5 1V10M9.5 14V17M15.5 6V17M3.5 1V3M15.5 1V3" strokeWidth="1.2" /><circle cx="3.5" cy="4.5" r="1.5" /><circle cx="9.5" cy="12" r="1.5" /><circle cx="15.5" cy="4.5" r="1.5" /></Svg></span></th>
          <th className={th}>Color</th>
          <th className="overflow-hidden pb-0.5 pl-[9px] text-left font-bold">Layer</th>
        </tr>
      </thead>
      <tbody>
        <tr className="h-[25px]">
          <td className={td}><button aria-label="Toggle group" className="ml-2 flex"><Chevron /></button></td>
          {Array.from({ length: 8 }, (_, i) => <td key={i} className={td} />)}
          <td />
        </tr>
        {markups.map((m, i) => (
          <tr key={i} className="h-[26px]">
            <td className={td}><span className="flex items-center gap-[2px] pl-[41px]"><span className="flex w-[22px] justify-center">{m.icon}</span>{m.subject}</span></td>
            <td className={td}>A2.2.1 - LE...</td>
            <td className={`${td} pr-[5px] text-right`}>1</td>
            <td className={`${td} pr-1`}><input type="checkbox" aria-label={`Lock ${m.subject}`} className="mx-auto block size-3.5 appearance-none rounded-[2px] border border-[#8a8a8a]" /></td>
            <td className={td}>{m.author}</td>
            <td className={td}>2/13/2018 7:51:...</td>
            <td className={td}>{m.x}</td>
            <td className={td} />
            <td className={`${td} pr-1`}><span className={`mx-auto block size-3 ${m.color}`} /></td>
            <td className="overflow-hidden pl-1">
              {m.layer && (
                <span className="flex items-center gap-[7px]">
                  <Svg w={14} h={14} color="#ddd"><path d="M.5 .5H13.5V13.5H.5Z" stroke="#999" /><path d="M1 7Q7 .5 13 7Q7 13 1 7Z" /><circle cx="7" cy="7" r="2" /></Svg>
                  {m.layer}
                </span>
              )}
            </td>
          </tr>
        ))}
        <tr className="h-1">
          {Array.from({ length: 9 }, (_, i) => <td key={i} className={td} />)}
          <td />
        </tr>
      </tbody>
    </table>
  );
}

function MarkupsPanel() {
  return (
    <section className="mt-0.5 mr-1 flex shrink-0 bg-black text-white">
      <div className="flex w-[35px] shrink-0 flex-col bg-[#2e2e2e]">
        <button aria-label="Collapse" className="flex h-[38px] items-center justify-center"><DoubleChevron /></button>
        <button aria-label="Markups List" className="flex h-[35px] items-center justify-center bg-[#1a5682]"><Svg><path d="M2 4H4M2 10H4M2 16H4M6.5 4H18M6.5 10H18M6.5 16H18" strokeWidth="1.8" /></Svg></button>
        <button aria-label="3D" className="flex h-[35px] items-center justify-center">
          <Svg>
            <path d="M.5 4.5L10 1L19.5 4.5V15L10 18.5L.5 15ZM.5 4.5L10 8L19.5 4.5M10 8V18.5" />
            <text x="6" y="15" fontSize="8" fontWeight="bold" textAnchor="middle" fill="#f2f2f2" stroke="none">3</text>
            <text x="14" y="15" fontSize="8" fontWeight="bold" textAnchor="middle" fill="#f2f2f2" stroke="none">D</text>
          </Svg>
        </button>
        <button aria-label="JavaScript" className="flex h-[35px] items-center justify-center">
          <Svg><path d="M4.5 15V3Q5 1.5 7 1.5H17Q18.5 2 18 4.5H15.5V16Q15 18.5 13 18.5H3Q1 18 1.5 15.5H12.5V18M15.5 1.5V4.5" strokeWidth="1.2" /><text x="10" y="12" fontSize="7" fontWeight="bold" textAnchor="middle" fill="#f2f2f2" stroke="none">JS</text></Svg>
        </button>
      </div>
      <div className="ml-px flex min-w-0 flex-1 flex-col bg-[#2e2e2e]">
        <div className="flex h-[42px] items-center pt-[3px] pr-3 pl-3 whitespace-nowrap">
          <h2 className="text-[19px] font-bold">Markups List</h2>
          <button aria-label="Markups menu" className="ml-2"><Chevron /></button>
          <button aria-label="Hide markups" className="ml-[13px]"><Svg><path d="M1 10Q10 1 19 10Q10 18 1 10ZM18 1.5L3 18.5" strokeWidth="1.2" /><circle cx="10" cy="10" r="3" /></Svg></button>
          <label className="ml-[9px] flex h-[30px] w-[330px] items-center gap-[7px] rounded-[2px] border border-[#8a8a8a] px-2">
            <Svg w={16} h={16} color="#ccc"><circle cx="6" cy="6" r="5" /><path d="M10 10L15 15" strokeWidth="1.3" /></Svg>
            <input aria-label="Search markups" placeholder="Search" className="min-w-0 flex-1 bg-transparent text-[15px] font-bold outline-none placeholder:text-white" />
            <Close />
          </label>
          <button className="ml-[27px] flex items-center gap-1.5 text-[19px] font-bold">
            <Svg w={16} h={16}><path d="M1.5 1.5H14.5L9.5 8V14.5L6.5 12.5V8Z" strokeWidth="1.2" /></Svg>
            Filter List
          </button>
          <button aria-label="Export" className="ml-9"><Svg><path d="M7 7.5H3.5V18.5H16.5V7.5H13M10 13V1.5M6.5 5L10 1.5L13.5 5" strokeWidth="1.2" /></Svg></button>
          <button aria-label="More" className="ml-auto pb-1"><DoubleChevron /></button>
        </div>
        <div className="flex">
          <div className="min-w-0 flex-1"><MarkupsTable /></div>
          <div className="flex w-[21px] shrink-0 justify-center bg-[#efefef] pt-[21px]"><div className="h-6 w-[3px] rounded bg-[#868686]" /></div>
        </div>
        <div className="flex h-[21px] items-center bg-[#efefef] pl-[21px]"><div className="h-[3px] w-[691px] rounded bg-[#868686]" /></div>
      </div>
    </section>
  );
}

const magnet = 'M10.5 9.5H14Q18.5 10 18.5 14Q18.5 18 14 18.5H10.5V16H14Q16 15.5 16 14Q16 12.5 14 12H10.5ZM12.5 9.5V12M12.5 16V18.5';

function StatusBar() {
  return (
    <footer className="mt-0.5 flex h-[34px] shrink-0 items-center overflow-hidden bg-[#2e2e2e] pb-px pl-px text-[15px] whitespace-nowrap text-white">
      <span className="flex-1">Ready</span>
      <IconButton label="Show grid"><Svg><path d="M1 4.5H19M1 10H19M1 15.5H19M4.5 1V19M10 1V19M15.5 1V19" strokeWidth="1.2" /></Svg></IconButton>
      <IconButton label="Snap to grid"><Svg><path d="M1 4.5H18M1 9H9M1 13.5H9M4.5 1V17M9.5 1V9M14.5 1V8" strokeWidth="1.2" /><path d={magnet} strokeWidth="1.2" /></Svg></IconButton>
      <IconButton label="Snap to document"><Svg><path d="M9 18.5H2.5V1.5H10.5L15.5 6V8M10.5 1.5V6.5H15.5" strokeWidth="1.2" /><path d={magnet} strokeWidth="1.2" /></Svg></IconButton>
      <IconButton label="Snap to markup"><Svg><path d="M4 14L6 10L13.5 2.5L18 7.5" strokeWidth="1.3" /><circle cx="4" cy="16" r="2.5" fill="#f2f2f2" /><path d={magnet} strokeWidth="1.2" /></Svg></IconButton>
      <IconButton label="Reuse" active><Svg><path d="M4 14L6 10L13.5 2.5L18 7.5" strokeWidth="1.3" /><circle cx="4" cy="16" r="2.5" fill="#f2f2f2" /><path d="M11.5 11Q9.5 17 14 18.5Q19.5 17 17.5 11.5M15.5 14V10.5H19" stroke="#1687e0" strokeWidth="1.5" /></Svg></IconButton>
      <IconButton label="Sync"><Svg><path d="M1.5 1.5H18.5V18.5H1.5ZM1.5 4.5H18.5M4.5 10V8H15M12 5.5L15 8L12 10.5M15.5 11V14H5M8 11.5L5 14L8 16.5" strokeWidth="1.2" /></Svg></IconButton>
      <button aria-label="Sync options" className="ml-[2px]"><Chevron color="#aaa" /></button>
      <span className="ml-8">1 in = 8'-0"</span>
      <span className="ml-8">42.00 x 30.00 in</span>
      <span className="ml-[58px] w-[39px] overflow-hidden">(11.28, 24.15)</span>
    </footer>
  );
}

const callouts = [
  'top-px left-px', 'top-[79px] left-px', 'top-[149px] left-[188px]', 'top-[259px] left-px', 'top-[175px] left-[359px]',
  'bottom-[271px] left-[307px]', 'bottom-[228px] left-px', 'bottom-px left-[511px]',
];

export default function App() {
  const [panel, setPanel] = useState('Tool Chest');
  return (
    <div className="relative h-screen overflow-hidden bg-white pt-2.5 pb-[5px] pl-[41px] font-[Roboto,sans-serif]">
      <div className="flex h-full flex-col bg-black pb-[3px] pl-[3px]">
        <MenuBar />
        <Toolbar />
        <FileBar />
        <div className="mt-px flex min-h-0 flex-1">
          <nav className="mr-px flex w-[35px] shrink-0 flex-col bg-[#2e2e2e]">
            {panels.map((p) => (
              <button key={p.name} aria-label={p.name} onClick={() => setPanel(p.name)} className={`flex h-[35px] items-center justify-center pr-px pb-px ${panel === p.name ? 'bg-[#1a5682]' : ''}`}>
                {p.icon}
              </button>
            ))}
          </nav>
          <ToolChest />
          <DocumentArea />
          <div className="w-0.5 shrink-0 bg-[#2e2e2e]" />
        </div>
        <MarkupsPanel />
        <StatusBar />
      </div>
      {callouts.map((pos, i) => (
        <span key={pos} className={`absolute flex size-[50px] items-center justify-center rounded-full bg-[#f9ab0b] font-['Liberation_Sans',sans-serif] text-4xl text-white ${pos}`}>{i + 1}</span>
      ))}
    </div>
  );
}
